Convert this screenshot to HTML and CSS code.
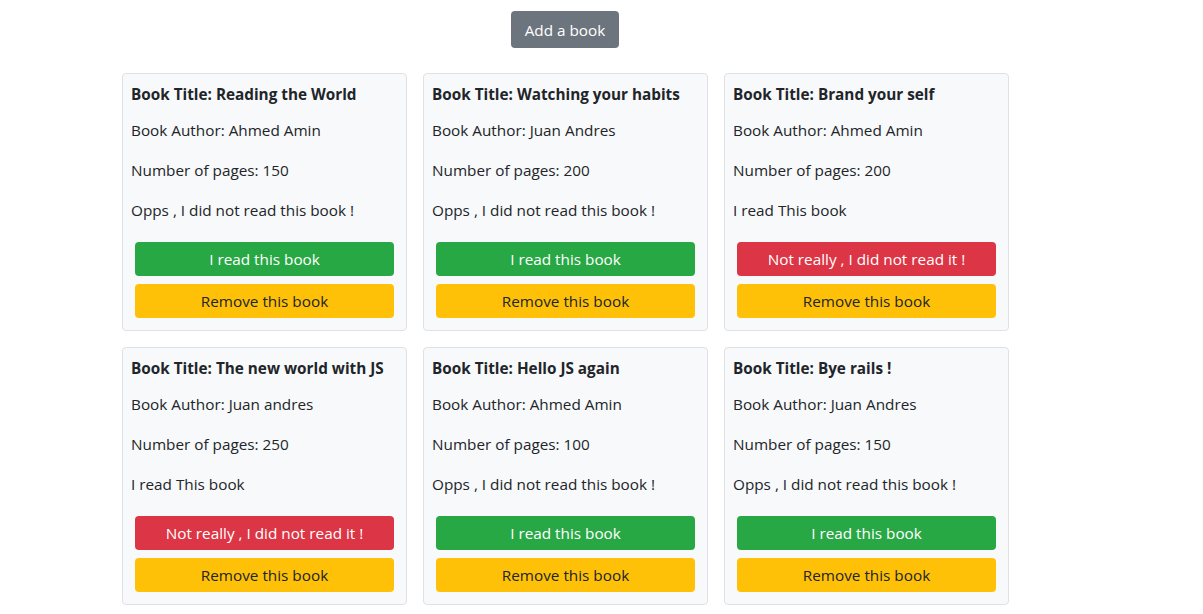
FILE: index.html
```html
<!DOCTYPE html>
<html>
<head>
<meta charset="utf-8">
<link rel="stylesheet" href="styles.css">
</head>
<body>
<div class="page">
  <div class="top"><button class="btn btn-add">Add a book</button></div>
  <div class="grid">
    <div class="card">
      <p class="title">Book Title: Reading the World</p>
      <p>Book Author: Ahmed Amin</p>
      <p>Number of pages: 150</p>
      <p>Opps , I did not read this book !</p>
      <button class="btn btn-green">I read this book</button>
      <button class="btn btn-yellow">Remove this book</button>
    </div>
    <div class="card">
      <p class="title">Book Title: Watching your habits</p>
      <p>Book Author: Juan Andres</p>
      <p>Number of pages: 200</p>
      <p>Opps , I did not read this book !</p>
      <button class="btn btn-green">I read this book</button>
      <button class="btn btn-yellow">Remove this book</button>
    </div>
    <div class="card">
      <p class="title">Book Title: Brand your self</p>
      <p>Book Author: Ahmed Amin</p>
      <p>Number of pages: 200</p>
      <p>I read This book</p>
      <button class="btn btn-red">Not really , I did not read it !</button>
      <button class="btn btn-yellow">Remove this book</button>
    </div>
    <div class="card">
      <p class="title">Book Title: The new world with JS</p>
      <p>Book Author: Juan andres</p>
      <p>Number of pages: 250</p>
      <p>I read This book</p>
      <button class="btn btn-red">Not really , I did not read it !</button>
      <button class="btn btn-yellow">Remove this book</button>
    </div>
    <div class="card">
      <p class="title">Book Title: Hello JS again</p>
      <p>Book Author: Ahmed Amin</p>
      <p>Number of pages: 100</p>
      <p>Opps , I did not read this book !</p>
      <button class="btn btn-green">I read this book</button>
      <button class="btn btn-yellow">Remove this book</button>
    </div>
    <div class="card">
      <p class="title">Book Title: Bye rails !</p>
      <p>Book Author: Juan Andres</p>
      <p>Number of pages: 150</p>
      <p>Opps , I did not read this book !</p>
      <button class="btn btn-green">I read this book</button>
      <button class="btn btn-yellow">Remove this book</button>
    </div>
  </div>
</div>
</body>
</html>
```
FILE: styles.css
```css
* { box-sizing: border-box; }
body {
  margin: 0;
  font-family: "Open Sans", "Noto Sans", sans-serif;
  font-size: 15.3px;
  line-height: 24px;
  color: #212529;
  background: #fff;
}
.page {
  width: 886px;
  margin-left: 122px;
}
.top {
  display: flex;
  justify-content: center;
  padding-top: 11px;
  margin-bottom: 25px;
}
.btn {
  display: block;
  font-family: inherit;
  font-size: 15.3px;
  line-height: 24px;
  border: 1px solid transparent;
  border-radius: 4px;
  cursor: pointer;
}
.btn-add {
  background: #6c757d;
  color: #fff;
  padding: 6px 12px 5px;
  width: 108px;
}
.grid {
  display: grid;
  grid-template-columns: repeat(3, 285px);
  column-gap: 16px;
  row-gap: 16px;
}
.card {
  background: #f8f9fa;
  border: 1px solid #dfe1e4;
  border-radius: 4px;
  padding: 8px;
  display: flex;
  flex-direction: column;
}
.card p {
  margin: 0 0 16px;
}
.card p.title {
  font-weight: 700;
  margin-bottom: 12px;
}
.card .btn {
  margin: 4px 4px;
  padding: 4px 0;
  width: calc(100% - 8px);
}
.btn-green { background: #28a745; color: #fff; }
.btn-red { background: #dc3545; color: #fff; }
.btn-yellow { background: #ffc107; color: #212529; }
```
